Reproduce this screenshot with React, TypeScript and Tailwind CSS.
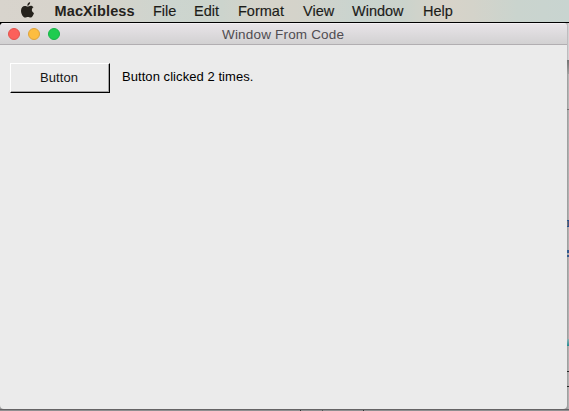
import React from "react";

const menus = [
  { label: "File", cls: "w-[41px]" },
  { label: "Edit", cls: "w-[44px]" },
  { label: "Format", cls: "w-[65px]" },
  { label: "View", cls: "w-[49px]" },
  { label: "Window", cls: "w-[71px]" },
  { label: "Help", cls: "w-[40px]" },
];

function AppleLogo() {
  return (
    <svg className="mt-[2px] ml-[21px] h-[16px] w-[13px] shrink-0" viewBox="0 0 13 16" fill="#25221d">
      <path d="M9.1 0C9.2 1.900 7.900 3.700 6.300 3.700C6.100 2 7.500.300 9.100 0Z" />
      <path d="M6.700 4.600C7.400 4.600 8.300 3.800 9.700 3.800C10.900 3.800 11.900 4.400 12.500 5.300C10.100 6.700 10.500 10 13 11C12.500 12.800 11.100 15.600 9.600 15.600C8.600 15.600 8.100 15 6.900 15C5.700 15 5.200 15.600 4.200 15.600C2.200 15.600 0 11.900 0 8.700C0 5.700 1.800 4 3.800 4C5 4 6 4.600 6.700 4.600Z" />
    </svg>
  );
}

function MenuBar() {
  return (
    <nav className="flex h-[22px] shrink-0 text-[14.5px] leading-[22px] text-[#1c1c19] [background-image:linear-gradient(90deg,#d8d4cd_0%,#d6d3cb_18%,#cdd5cf_30%,#ccd4cd_39%,#d6d3ca_46%,#d4d3ca_52%,#c9d4cf_63%,#cbd3cc_71%,#d8d3c9_78%,#d4d3ca_83%,#cad4ce_91%,#c8d4d0_100%)]">
      <AppleLogo />
      <span className="ml-[20.5px] w-[98.5px] shrink-0 whitespace-nowrap font-bold tracking-[0.12px] text-[#25221c]">MacXibless</span>
      {menus.map((m) => (
        <span key={m.label} className={`shrink-0 whitespace-nowrap [-webkit-text-stroke:0.15px_#1c1c19] ${m.cls}`}>
          {m.label}
        </span>
      ))}
    </nav>
  );
}

function TitleBar() {
  return (
    <header className="flex h-[22px] shrink-0 items-center border-b border-[#b1aeb1] bg-linear-to-b from-[#e9e5e9] to-[#d2d1d2] shadow-[inset_0_1px_#f3f0f3]">
      <div className="ml-[8px] flex w-[214px] shrink-0 gap-2">
        <i className="size-3 rounded-full border border-[#e2534e] bg-[#fc605b]" />
        <i className="size-3 rounded-full border border-[#dfa33c] bg-[#fdbd41]" />
        <i className="size-3 rounded-full border border-[#17b448] bg-[#1fcc50]" />
      </div>
      <h1 className="pt-[2px] whitespace-nowrap text-[13.5px] leading-5 tracking-[0.18px] text-[#504c51]">Window From Code</h1>
    </header>
  );
}

function DesktopEdge() {
  return (
    <aside className="flex w-[2px] shrink-0 flex-col bg-linear-to-r from-[#979797] to-[#b9b9b9]">
      <i className="h-[37px] bg-linear-to-r from-[#b4b0b4] to-[#dedede]" />
      <i className="h-[14px] bg-linear-to-b from-[#747474] to-[#a0a0a0]" />
      <i className="h-[35px] bg-linear-to-r from-[#969696] to-[#c1c1c1]" />
      <i className="h-px bg-[#707070]" />
      <i className="mt-[110px] h-[7px] border-y border-[#24508d] bg-linear-to-r from-[#86766a] to-[#24508d]" />
      <i className="mt-[23px] h-[3px] bg-[#31598d]" />
      <i className="mt-[2px] h-[2px] bg-[#31598d]" />
      <i className="mt-[82px] h-[7px] bg-linear-to-b from-[#8bb1b2] to-[#168d95]" />
      <i className="mt-[25px] h-px bg-[#252525]" />
      <i className="mt-[14px] h-px bg-[#252525]" />
    </aside>
  );
}

export default function App() {
  const [count, setCount] = React.useState(2);
  return (
    <div className="flex h-[411px] w-[569px] flex-col overflow-hidden bg-[#777477] [font-family:'Liberation_Sans',Arial,sans-serif]">
      <MenuBar />
      <div className="h-px shrink-0 bg-black" />
      <div className="flex h-[386px] shrink-0 [background-image:linear-gradient(90deg,#000_0,#000_10px,transparent_10px),linear-gradient(#bbb,#999)] bg-[length:100%_6px,100%_100%] bg-no-repeat">
        <section className="flex w-[567px] flex-col overflow-hidden rounded-[4px] bg-[#ebebeb]">
          <TitleBar />
          <main className="flex items-start pt-[18px] pl-[10px]">
            <button
              onClick={() => setCount(count + 1)}
              className="h-[30px] w-[100px] border-t border-r border-b border-l border-t-white border-r-black border-b-black border-l-white bg-[#ebebeb] pr-[2px] text-[13px] leading-[28px] tracking-[0.1px] text-[#161616] shadow-[inset_-1px_-1px_#a5a5a5]"
            >
              Button
            </button>
            <p className="ml-[12px] text-[13px] leading-[28px] tracking-[0.06px] whitespace-nowrap text-black">Button clicked {count} times.</p>
          </main>
        </section>
        <DesktopEdge />
      </div>
      <footer className="flex h-[2px] shrink-0 border-t border-[#656365] bg-[#918f91]">
        <i className="ml-[300px] h-px w-px bg-[#333]" />
        <i className="ml-[21px] h-px w-px bg-[#555]" />
        <i className="ml-[40px] h-px w-px bg-[#333]" />
      </footer>
    </div>
  );
}
